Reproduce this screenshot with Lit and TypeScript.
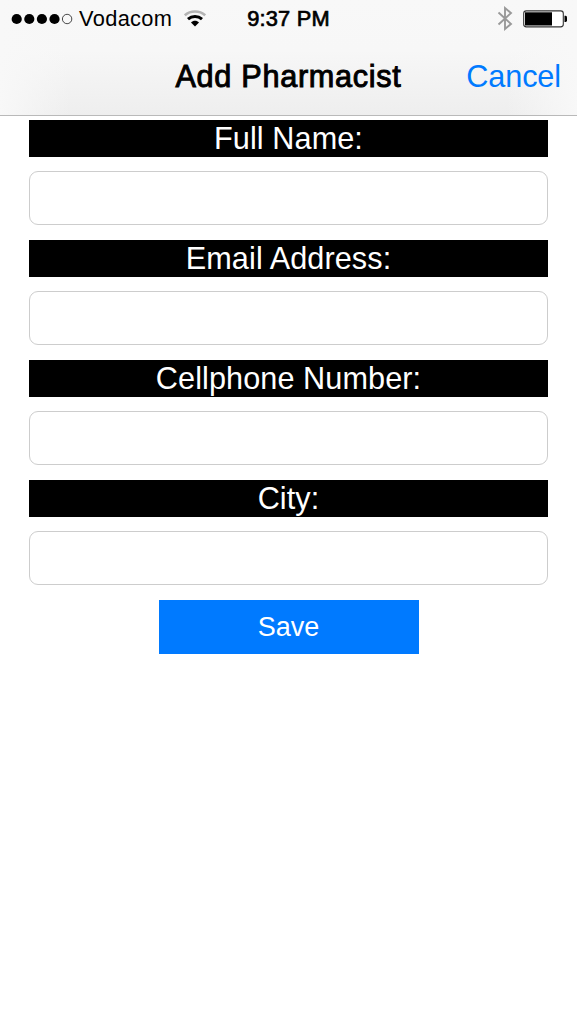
import { LitElement, html, css } from "lit";
import { customElement } from "lit/decorators.js";

@customElement("form-field")
class FormField extends LitElement {
  static properties = { label: { type: String } };
  declare label: string;

  static styles = css`
    :host { display: block; }
    .label {
      height: 37px; line-height: 37px; background: #000; color: #fff;
      text-align: center; font-size: 30.65px; letter-spacing: 0.08px; margin-bottom: 14px;
    }
    .input {
      display: block; box-sizing: border-box; width: 100%; height: 54px;
      border: 1px solid #cdcdcd; border-radius: 9px; background: #fff;
      outline: none; padding: 0 12px; font: inherit; font-size: 25px;
    }
  `;

  render() {
    return html`
      <div class="label">${this.label}</div>
      <input class="input" type="text" aria-label=${this.label} />
    `;
  }
}

@customElement("app-root")
class AppRoot extends LitElement {
  static styles = css`
    :host {
      display: block; height: 1024px; background: #fff; overflow: hidden;
      font-family: "Liberation Sans", Arial, sans-serif; color: #000;
    }
    .top {
      box-sizing: border-box; height: 116px; border-bottom: 1px solid #b9b9b9;
      background:
        linear-gradient(90deg, #f8f8f8 0, rgba(248,248,248,0) 70px, rgba(248,248,248,0) 507px, #f8f8f8 577px),
        linear-gradient(#f8f8f8 0, #f7f7f7 50px, #eeeeee 115px);
    }
    .status {
      display: grid; grid-template-columns: 1fr auto 1fr; align-items: center;
      height: 37px; padding: 0 9px 0 11px; font-size: 21.8px; line-height: 37px;
    }
    .left { display: flex; align-items: center; }
    .dots { width: 62px; height: 12px; margin-right: 6px; }
    .carrier { letter-spacing: 0.35px; }
    .wifi { width: 22px; height: 17px; margin-left: 12px; }
    .time { -webkit-text-stroke: 0.7px #000; letter-spacing: 0.2px; margin-right: 2px; }
    .right { display: flex; align-items: center; justify-content: flex-end; }
    .bt { width: 16px; height: 25px; margin-right: 10px; }
    .battery { width: 45px; height: 18px; }
    .nav {
      display: grid; grid-template-columns: 1fr auto 1fr; align-items: center;
      height: 79px; padding: 0 16px; font-size: 30.65px; line-height: 79px;
    }
    .title { grid-column: 2; -webkit-text-stroke: 0.95px #000; letter-spacing: 0.7px; }
    .cancel { color: #007aff; text-align: right; letter-spacing: -0.1px; }
    .form { display: flex; flex-direction: column; gap: 15px; padding: 4px 29px 0; }
    .save {
      align-self: center; width: 260px; height: 54px; border: 0; padding: 0;
      background: #007aff; color: #fff; font: 27px/54px "Liberation Sans", Arial, sans-serif;
    }
  `;

  render() {
    return html`
      <div class="top">
        <div class="status">
          <div class="left">
            <svg class="dots" viewBox="0 0 62 12">
              <circle cx="5.7" cy="6" r="5.1" /><circle cx="18.3" cy="6" r="5.1" />
              <circle cx="30.9" cy="6" r="5.1" /><circle cx="43.5" cy="6" r="5.1" />
              <circle cx="56.1" cy="6" r="4.7" fill="none" stroke="#333" stroke-width=".9" />
            </svg>
            <span class="carrier">Vodacom</span>
            <svg class="wifi" viewBox="0 0 22 17" fill="none">
              <path d="M.8 5.3C6.4 .2 15.6 .2 21.2 5.3" stroke="#b4b4b4" stroke-width="2.6" />
              <path d="M4 9.2C8 5.6 14 5.6 18 9.2" stroke="#000" stroke-width="3" />
              <path d="M7 12.4C9.2 10.2 12.8 10.2 15 12.4L11 16.4Z" fill="#000" />
            </svg>
          </div>
          <div class="time">9:37 PM</div>
          <div class="right">
            <svg class="bt" viewBox="0 0 16 25" fill="none" stroke="#999" stroke-width="1.9">
              <path d="M1.5 6.5L14 18L8 23V2L14 7L1.5 18.5" />
            </svg>
            <svg class="battery" viewBox="0 0 45 18">
              <rect x=".7" y=".9" width="39.6" height="16" rx="2.6" fill="#fff" stroke="#333" stroke-width="1.1" />
              <rect x="2" y="2.3" width="27" height="13.2" fill="#000" />
              <path d="M41.5 5.8h1.2q1.3 .3 1.3 1.7v2.8q0 1.4-1.3 1.7h-1.2z" fill="#000" />
            </svg>
          </div>
        </div>
        <div class="nav">
          <div class="title">Add Pharmacist</div>
          <div class="cancel">Cancel</div>
        </div>
      </div>
      <div class="form">
        <form-field label="Full Name:"></form-field>
        <form-field label="Email Address:"></form-field>
        <form-field label="Cellphone Number:"></form-field>
        <form-field label="City:"></form-field>
        <button class="save">Save</button>
      </div>
    `;
  }
}
